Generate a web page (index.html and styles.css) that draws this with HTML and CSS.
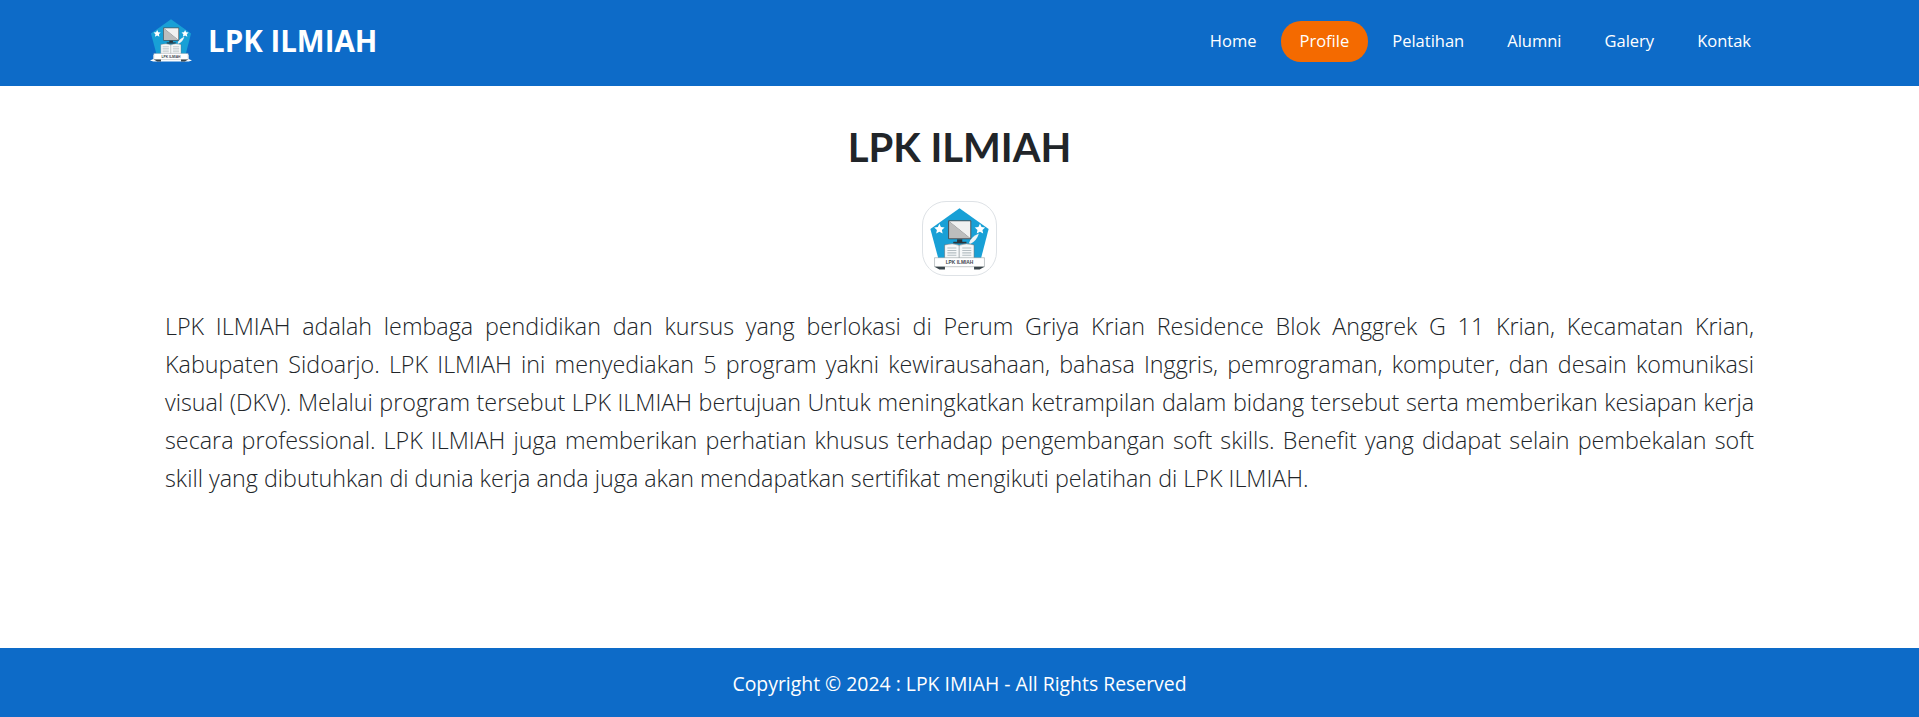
FILE: index.html
```html
<!DOCTYPE html>
<html lang="id">
<head>
  <meta charset="UTF-8">
  <meta name="viewport" content="width=device-width, initial-scale=1.0">
  <title>LPK ILMIAH - Profile</title>
  <link rel="stylesheet" href="styles.css">
</head>
<body>
  <svg class="defs" width="0" height="0" aria-hidden="true">
    <defs>
      <g id="logo">
        <path d="M52 95 L136 35 L220 95 L195 192 L78 192 Z" fill="#18a0d6"/>
        <path d="M78 80 l4.500 9.500 10.500 1.200 -7.800 7.200 2.100 10.500 -9.300-5.400 -9.300 5.400 2.100-10.500 -7.800-7.200 10.500-1.200 Z" fill="#fff"/>
        <path d="M195 80 l4.500 9.500 10.500 1.200 -7.800 7.200 2.100 10.500 -9.300-5.400 -9.300 5.400 2.100-10.500 -7.800-7.200 10.500-1.200 Z" fill="#fff"/>
        <rect x="103" y="70" width="67" height="55" rx="3" fill="#4a555c"/>
        <path d="M106 73 H167 V122 Z" fill="#f1f1f1"/>
        <path d="M106 73 V122 H167 Z" fill="#bdbdbd"/>
        <rect x="129" y="125" width="15" height="8" fill="#2b343a"/>
        <rect x="118" y="132" width="38" height="5" fill="#2b343a"/>
        <path d="M163 136 Q170 116 192 108 Q186 128 168 138 Z" fill="#eef3f5"/>
        <path d="M93 141 Q116 134 135 142 Q155 134 178 141 V182 H93 Z" fill="#f6f8f9" stroke="#5c676d" stroke-width="1.500"/>
        <path d="M135 142 V182" stroke="#5c676d" stroke-width="1.500"/>
        <path d="M101 150 H127 M101 157 H127 M101 164 H127 M101 171 H127 M144 150 H170 M144 157 H170 M144 164 H170 M144 171 H170" stroke="#b4bdc2" stroke-width="3"/>
        <path d="M48 208 L62 202 V184 H210 V202 L224 208 L210 212 H62 Z" fill="#fff"/>
        <path d="M64 178 H208 V204 H64 Z" fill="#fff" stroke="#8b9499" stroke-width="1.500"/>
        <path d="M64 204 L78 212 H94 V204 Z M208 204 L194 212 H178 V204 Z" fill="#39444a"/>
      </g>
    </defs>
  </svg>

  <header class="topbar">
    <a class="brand" href="#">
      <svg class="brand-logo" viewBox="48 32 176 184"><use href="#logo"/><text x="136" y="197" class="logo-text">LPK ILMIAH</text></svg>
      <span>LPK ILMIAH</span>
    </a>
    <nav class="menu">
      <a href="#">Home</a>
      <a class="active" href="#">Profile</a>
      <a href="#">Pelatihan</a>
      <a href="#">Alumni</a>
      <a href="#">Galery</a>
      <a href="#">Kontak</a>
    </nav>
  </header>

  <main class="content">
    <h1>LPK ILMIAH</h1>
    <div class="thumb">
      <svg class="thumb-logo" viewBox="48 32 176 184"><use href="#logo"/><text x="136" y="197" class="logo-text">LPK ILMIAH</text></svg>
    </div>
    <p>LPK ILMIAH adalah lembaga pendidikan dan kursus yang berlokasi di Perum Griya Krian Residence Blok Anggrek G 11 Krian, Kecamatan Krian, Kabupaten Sidoarjo. LPK ILMIAH ini menyediakan 5 program yakni kewirausahaan, bahasa Inggris, pemrograman, komputer, dan desain komunikasi visual (DKV). Melalui program tersebut LPK ILMIAH bertujuan Untuk meningkatkan ketrampilan dalam bidang tersebut serta memberikan kesiapan kerja secara professional. LPK ILMIAH juga memberikan perhatian khusus terhadap pengembangan soft skills. Benefit yang didapat selain pembekalan soft skill yang dibutuhkan di dunia kerja anda juga akan mendapatkan sertifikat mengikuti pelatihan di LPK ILMIAH.</p>
  </main>

  <footer class="footer">Copyright © 2024 : LPK IMIAH - All Rights Reserved</footer>
</body>
</html>
```

FILE: styles.css
```css
* { box-sizing: border-box; margin: 0; padding: 0; }

body {
  min-height: 100vh;
  display: flex;
  flex-direction: column;
  font-family: "Open Sans", "Noto Sans", sans-serif;
  color: #212529;
  background-color: #fff;
}

a { text-decoration: none; color: inherit; }

.defs { position: absolute; }

.logo-text {
  font-family: "Liberation Sans", sans-serif;
  font-size: 14px;
  font-weight: 700;
  text-anchor: middle;
  fill: #3c464c;
}

.topbar {
  height: 86px;
  display: flex;
  justify-content: space-between;
  align-items: center;
  padding: 0 149px 5px 150px;
  background-color: #0d6bc8;
  color: #fff;
}

.brand {
  display: flex;
  align-items: center;
  gap: 16px;
  font-size: 29.5px;
  font-weight: 700;
}

.brand-logo {
  width: 42px;
  height: 45px;
}

.menu {
  display: flex;
  align-items: center;
  gap: 5px;
  margin-top: 2px;
  font-size: 16.5px;
}

.menu a {
  padding: 8px 19px;
  height: 41px;
  line-height: 23px;
  border-radius: 20px;
}

.menu a.active { background-color: #f46a00; }

.content {
  flex-grow: 1;
  padding: 0 165px;
}

h1 {
  margin-top: 38px;
  font-family: "Lato", sans-serif;
  font-size: 40px;
  font-weight: 700;
  line-height: 46px;
  text-align: center;
}

.thumb {
  width: 75px;
  height: 75px;
  margin: 31px auto 0;
  display: flex;
  justify-content: center;
  align-items: center;
  border: 1px solid #dee2e6;
  border-radius: 24px;
}

.thumb-logo {
  display: block;
  width: 61px;
  height: 64px;
}

.content p {
  margin-top: 31px;
  font-size: 23.3px;
  font-weight: 300;
  line-height: 38px;
  text-align: justify;
}

.footer {
  height: 69px;
  display: flex;
  justify-content: center;
  align-items: center;
  padding-top: 2px;
  font-size: 19.4px;
  background-color: #0d6bc8;
  color: #fff;
}
```
